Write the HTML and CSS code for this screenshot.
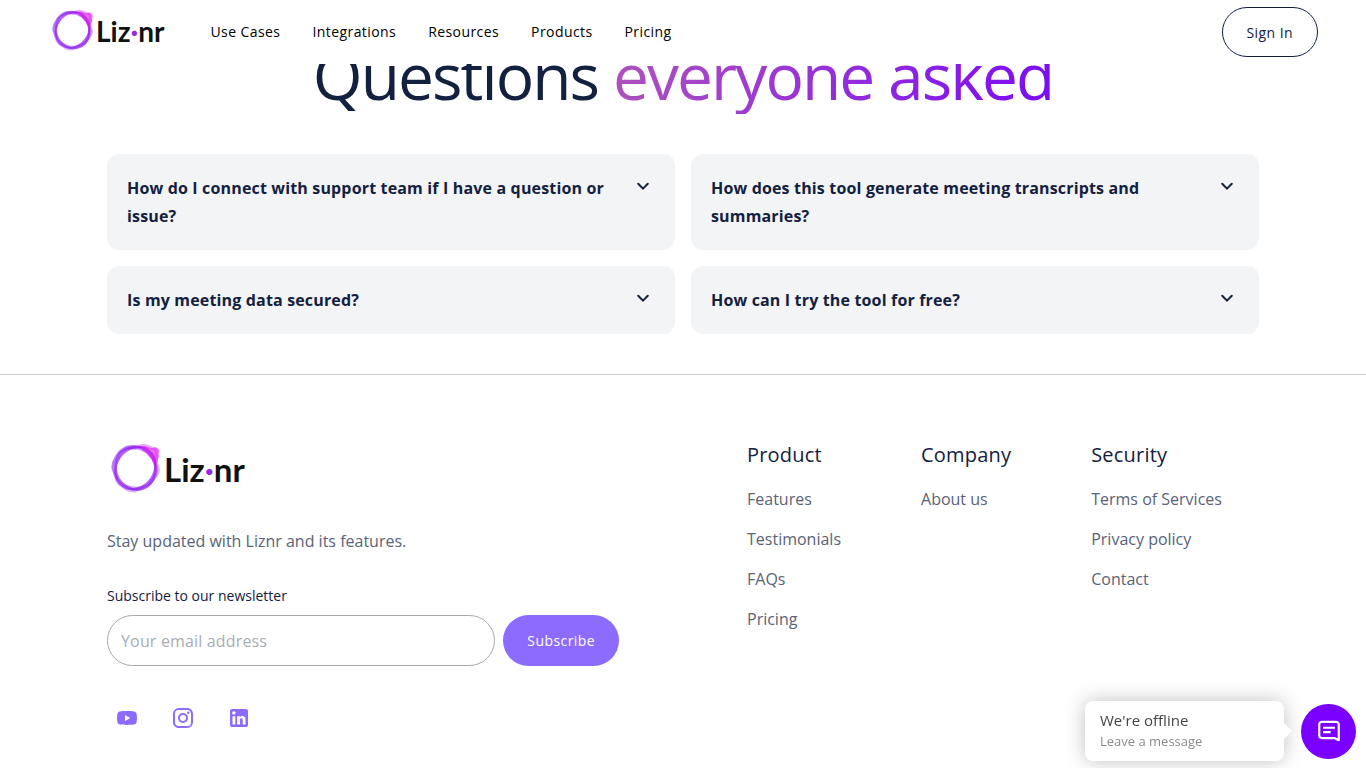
FILE: index.html
```html
<!DOCTYPE html>
<html lang="en">

<head>
    <meta charset="UTF-8">
    <meta name="viewport" content="width=device-width, initial-scale=1.0">
    <title>Liznr</title>
    <link rel="stylesheet" href="styles.css">
</head>

<body>
    <!-- shared shapes -->
    <svg class="sprite" aria-hidden="true">
        <linearGradient id="ring" gradientUnits="userSpaceOnUse" x1="8" y1="38" x2="38" y2="4">
            <stop offset="0" stop-color="#9a2cf5" />
            <stop offset="0.65" stop-color="#7d14ee" />
            <stop offset="1" stop-color="#e415ee" />
        </linearGradient>
        <symbol id="logo" viewBox="0 0 42 42">
            <g fill="none" stroke="url(#ring)">
                <ellipse cx="20.500" cy="21" rx="18.500" ry="16" stroke-width="2" opacity="0.7" transform="rotate(-55 20.500 21)" />
                <ellipse cx="20.500" cy="21" rx="18.500" ry="16.500" stroke-width="2" opacity="0.6" transform="rotate(70 20.500 21)" />
                <ellipse cx="20" cy="21" rx="18.500" ry="16.500" stroke-width="2" opacity="0.4" transform="rotate(20 20 21)" />
                <path stroke-width="3" opacity="0.35" d="M11 5C15 1 20 6 24 3C29 0 33 5 37 5C40 9 36 15 39 20C41 26 36 28 33 34C29 39 24 37 20 40C14 41 12 37 8 35C3 32 5 27 2 22C0 16 5 14 6 10C7 7 9 6 11 5Z" />
            </g>
            <path fill="#dd1cf2" opacity="0.6" d="M26 3C29 1 32 5 36 4C39 3 42 6 40 9C41 12 39 14 38 18C36 18 34 15 34 13C31 12 31 8 26 6Z" />
        </symbol>
        <symbol id="chevron" viewBox="0 0 24 24">
            <path fill="none" stroke="currentColor" stroke-width="2" stroke-linecap="round" d="M7.200 9.800l4.800 4.800L16.800 9.800" />
        </symbol>
    </svg>

    <header class="navbar">
        <a class="logo" href="#">
            <svg><use href="#logo" /></svg>
            <span>Liz<i>·</i>nr</span>
        </a>
        <nav class="menu">
            <a href="#">Use Cases</a>
            <a href="#">Integrations</a>
            <a href="#">Resources</a>
            <a href="#">Products</a>
            <a href="#">Pricing</a>
        </nav>
        <span class="spacer"></span>
        <button type="button" class="btn btn-outline">Sign In</button>
    </header>

    <main class="container faq">
        <h2>Questions <span class="gradient">everyone asked</span></h2>
        <div class="faq-grid">
            <button type="button" class="faq-item">
                <span>How do I connect with support team if I have a question or issue?</span>
                <svg><use href="#chevron" /></svg>
            </button>
            <button type="button" class="faq-item">
                <span>How does this tool generate meeting transcripts and summaries?</span>
                <svg><use href="#chevron" /></svg>
            </button>
            <button type="button" class="faq-item">
                <span>Is my meeting data secured?</span>
                <svg><use href="#chevron" /></svg>
            </button>
            <button type="button" class="faq-item">
                <span>How can I try the tool for free?</span>
                <svg><use href="#chevron" /></svg>
            </button>
        </div>
    </main>

    <footer class="footer">
        <div class="container footer-grid">
            <div>
                <a class="logo logo-large" href="#">
                    <svg><use href="#logo" /></svg>
                    <span>Liz<i>·</i>nr</span>
                </a>
                <p class="tagline">Stay updated with Liznr and its features.</p>
                <form class="newsletter">
                    <label for="email">Subscribe to our newsletter</label>
                    <div class="newsletter-row">
                        <input type="email" id="email" placeholder="Your email address">
                        <button type="button" class="btn btn-fill">Subscribe</button>
                    </div>
                </form>
                <div class="social">
                    <a href="#" aria-label="YouTube">
                        <svg viewBox="0 0 24 24"><path fill-rule="evenodd" d="M12 5c3 0 5.500.1 7 .4 1.500.3 2.300 1.100 2.600 2.600.5 2.600.5 5.400 0 8-.3 1.500-1.100 2.300-2.600 2.600-3 .5-11 .5-14 0-1.500-.3-2.300-1.100-2.600-2.600-.5-2.600-.5-5.400 0-8C2.700 6.500 3.500 5.700 5 5.400 6.500 5.100 9 5 12 5zM10 9v6l5.200-3z" /></svg>
                    </a>
                    <a href="#" aria-label="Instagram">
                        <svg viewBox="0 0 24 24"><path d="M7.800 2h8.400C19.400 2 22 4.600 22 7.800v8.400a5.800 5.800 0 0 1-5.800 5.800H7.800C4.600 22 2 19.400 2 16.200V7.800A5.800 5.800 0 0 1 7.800 2m-.2 2A3.600 3.600 0 0 0 4 7.600v8.800C4 18.390 5.610 20 7.600 20h8.800a3.600 3.600 0 0 0 3.600-3.600V7.600C20 5.610 18.390 4 16.400 4H7.600m9.650 1.500a1.250 1.250 0 1 1 0 2.500 1.250 1.250 0 0 1 0-2.500M12 7a5 5 0 1 1 0 10 5 5 0 0 1 0-10m0 2a3 3 0 1 0 0 6 3 3 0 0 0 0-6z" /></svg>
                    </a>
                    <a href="#" aria-label="LinkedIn">
                        <svg viewBox="0 0 24 24"><path d="M19 3a2 2 0 0 1 2 2v14a2 2 0 0 1-2 2H5a2 2 0 0 1-2-2V5a2 2 0 0 1 2-2h14m-.5 15.500v-5.300a3.260 3.260 0 0 0-3.260-3.260c-.85 0-1.840.52-2.320 1.300v-1.110h-2.790v8.370h2.790v-4.930c0-.77.62-1.400 1.390-1.400a1.400 1.400 0 0 1 1.400 1.400v4.930h2.790M6.880 8.560a1.680 1.680 0 0 0 1.680-1.680c0-.93-.75-1.690-1.680-1.690a1.690 1.690 0 0 0-1.690 1.690c0 .93.76 1.680 1.690 1.680m1.390 9.940v-8.370H5.500v8.370h2.770z" /></svg>
                    </a>
                </div>
            </div>
            <div class="links">
                <div class="links-col">
                    <h3>Product</h3>
                    <a href="#">Features</a>
                    <a href="#">Testimonials</a>
                    <a href="#">FAQs</a>
                    <a href="#">Pricing</a>
                </div>
                <div class="links-col">
                    <h3>Company</h3>
                    <a href="#">About us</a>
                </div>
                <div class="links-col">
                    <h3>Security</h3>
                    <a href="#">Terms of Services</a>
                    <a href="#">Privacy policy</a>
                    <a href="#">Contact</a>
                </div>
            </div>
        </div>
    </footer>

    <div class="chat">
        <div class="chat-bubble">
            <div class="chat-title">We're offline</div>
            <div class="chat-text">Leave a message</div>
        </div>
        <button type="button" class="chat-btn" aria-label="Open chat">
            <svg viewBox="0 0 24 24"><path fill="none" stroke="#fff" stroke-width="2" stroke-linejoin="round" d="M21 20.500l-4-2H5.500A2.500 2.500 0 0 1 3 16V6A2.500 2.500 0 0 1 5.500 3.500h13A2.500 2.500 0 0 1 21 6zM6.500 9h11M6.500 13h7" /></svg>
        </button>
    </div>
</body>

</html>
```
FILE: styles.css
```css
* {
    box-sizing: border-box;
}

body {
    margin: 0;
    font-family: "Open Sans", "Noto Sans", sans-serif;
    font-size: 16px;
    color: #132140;
    background-color: #fff;
}

a {
    color: inherit;
    text-decoration: none;
}

.sprite {
    position: absolute;
    width: 0;
    height: 0;
}

.container {
    max-width: 1200px;
    margin: 0 auto;
    padding: 0 24px;
}

.spacer {
    flex: 1;
}

/* navbar */
.navbar {
    position: fixed;
    top: 0;
    left: 0;
    right: 0;
    z-index: 2;
    height: 64px;
    padding: 0 48px 0 52px;
    display: flex;
    align-items: center;
    background-color: #fff;
}

.logo {
    display: flex;
    align-items: center;
    gap: 2px;
    padding-bottom: 4px;
    font-family: Lato, sans-serif;
    font-weight: 700;
    font-size: 28px;
    line-height: 42px;
    color: #111;
}

.logo svg {
    width: 42px;
    height: 42px;
}

.logo span {
    padding-top: 2px;
}

.logo i {
    font-style: normal;
    color: #8f2be0;
}

.logo-large {
    gap: 3px;
    padding: 4px 0 0 4px;
    font-size: 33px;
    line-height: 48px;
}

.logo-large svg {
    width: 50px;
    height: 50px;
}

.menu {
    display: flex;
    gap: 32px;
    margin-left: 46px;
    padding-bottom: 2px;
    font-size: 14px;
    letter-spacing: 0.03em;
    color: #000;
}

.btn {
    font-family: inherit;
    font-size: 14px;
    letter-spacing: 0.03em;
    height: 50px;
    padding: 0 24px;
    border-radius: 25px;
    cursor: pointer;
}

.btn-outline {
    border: 1px solid #132140;
    background-color: #fff;
    color: #132140;
}

.btn-fill {
    border: none;
    background-color: #8c6bff;
    color: #fff;
}

/* faq */
.faq {
    padding-top: 37px;
    padding-bottom: 40px;
}

.faq h2 {
    margin: 0 0 40px;
    font-size: 64px;
    line-height: 77px;
    font-weight: 400;
    letter-spacing: -0.03em;
    text-align: center;
}

.gradient {
    display: inline-block;
    vertical-align: top;
    background: linear-gradient(110deg, #b054bc, #7a0af5);
    -webkit-background-clip: text;
    background-clip: text;
    color: transparent;
}

.faq-grid {
    display: grid;
    grid-template-columns: 1fr 1fr;
    gap: 16px;
}

.faq-item {
    display: flex;
    justify-content: space-between;
    align-items: flex-start;
    gap: 20px;
    padding: 20px;
    border: none;
    border-radius: 12px;
    background-color: #f3f4f6;
    color: inherit;
    font: inherit;
    font-weight: 700;
    line-height: 28px;
    letter-spacing: 0.01em;
    text-align: left;
    cursor: pointer;
}

.faq-item svg {
    flex: none;
    width: 24px;
    height: 24px;
}

/* footer */
.footer {
    border-top: 1px solid #ccc;
    padding: 64px 0 30px;
}

.footer-grid {
    display: grid;
    grid-template-columns: 1fr 1fr;
    gap: 128px;
}

.tagline {
    margin: 36px 0 0;
    line-height: 24px;
    color: #5a6377;
}

.newsletter {
    margin-top: 32px;
}

.newsletter label {
    display: block;
    font-size: 14px;
    line-height: 22px;
}

.newsletter-row {
    display: flex;
    gap: 8px;
    margin-top: 8px;
}

.newsletter input {
    flex: 1;
    min-width: 0;
    height: 51px;
    padding: 0 13px;
    border: 1px solid #a9a9ad;
    border-radius: 26px;
    font: inherit;
    letter-spacing: 0.01em;
    color: inherit;
}

.newsletter input::placeholder {
    color: #a9adb5;
}

.newsletter .btn {
    height: 51px;
    border-radius: 26px;
}

.social {
    display: flex;
    gap: 16px;
    margin-top: 32px;
}

.social a {
    padding: 8px;
    color: #8c6bff;
}

.social svg {
    display: block;
    width: 24px;
    height: 24px;
    fill: currentColor;
}

.links {
    display: flex;
    gap: 80px;
}

.links-col {
    display: flex;
    flex-direction: column;
    gap: 16px;
    line-height: 24px;
    color: #5a6377;
    white-space: nowrap;
}

.links-col h3 {
    margin: 0;
    font-size: 20px;
    line-height: 32px;
    font-weight: 400;
    letter-spacing: 0.01em;
    color: #132140;
}

/* chat widget */
.chat {
    position: fixed;
    right: 10px;
    bottom: 7px;
    z-index: 3;
    display: flex;
    align-items: center;
    gap: 17px;
}

.chat-bubble {
    position: relative;
    width: 199px;
    padding: 7px 15px 11px;
    border-radius: 8px;
    background-color: #fff;
    box-shadow: 0 0 20px rgba(0, 0, 0, 0.25);
}

.chat-bubble::after {
    content: "";
    position: absolute;
    top: 50%;
    left: 100%;
    margin-top: -8px;
    border: 8px solid transparent;
    border-left-color: #fff;
    border-right-width: 0;
}

.chat-title {
    font-size: 15px;
    line-height: 24px;
    color: #444;
}

.chat-text {
    font-size: 13px;
    line-height: 18px;
    color: #8a8a8a;
}

.chat-btn {
    display: flex;
    align-items: center;
    justify-content: center;
    width: 55px;
    height: 55px;
    padding: 0;
    border: none;
    border-radius: 50%;
    background-color: #7a00ff;
    cursor: pointer;
}

.chat-btn svg {
    width: 26px;
    height: 26px;
}
```
